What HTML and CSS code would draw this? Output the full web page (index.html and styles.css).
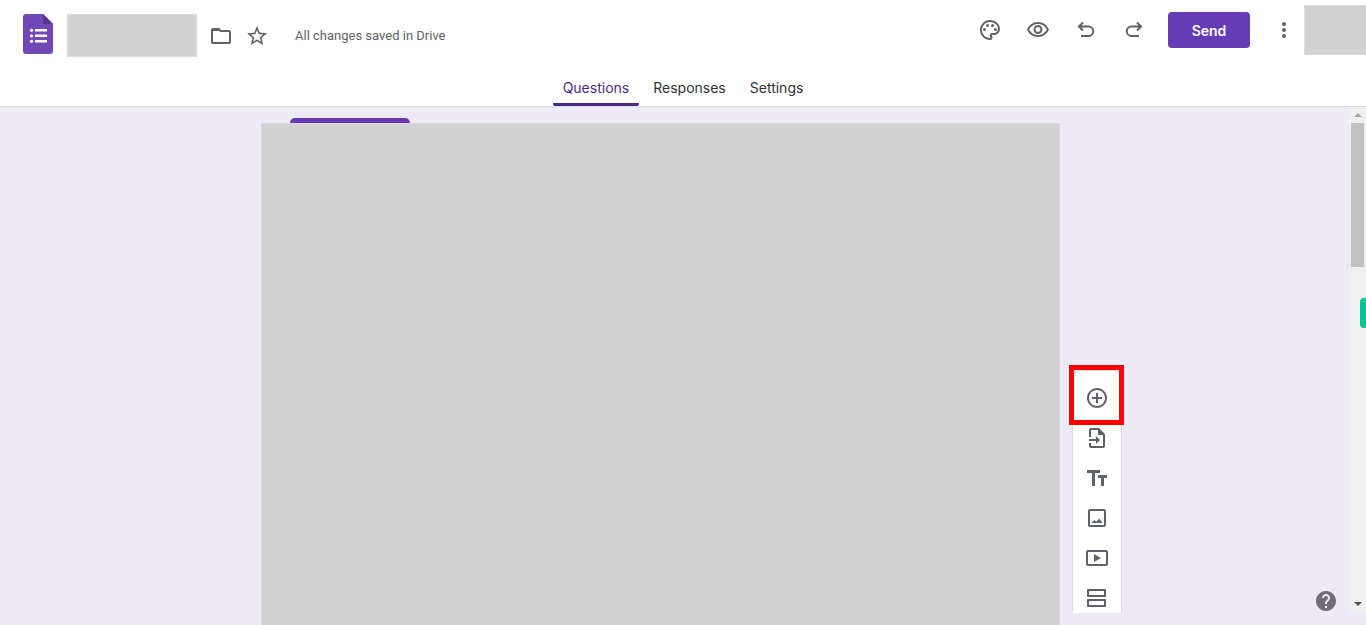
FILE: index.html
```html
<!DOCTYPE html>
<html lang="en">
<head>
<meta charset="utf-8">
<meta name="viewport" content="width=device-width, initial-scale=1">
<title>Form editor</title>
<link rel="stylesheet" href="styles.css">
</head>
<body>
<header class="header">
  <div class="topbar">
    <div class="brand">
      <a class="logo" href="#" aria-label="Forms home">
        <svg width="30" height="40" viewBox="0 0 30 40"><path fill="#7248b9" d="M3 0h17l10 10v27a3 3 0 0 1-3 3H3a3 3 0 0 1-3-3V3a3 3 0 0 1 3-3z"/><path fill="#56368a" d="M20 0l10 10H20z"/><g fill="#fff"><path d="M12 15h12v2.500H12zM12 20.500h12V23H12zM12 26h12v2.500H12z"/><circle cx="8.500" cy="16.300" r="1.600"/><circle cx="8.500" cy="21.800" r="1.600"/><circle cx="8.500" cy="27.300" r="1.600"/></g></svg>
      </a>
      <div class="title-mask"></div>
      <button class="icon-button" aria-label="Move to folder"><svg width="24" height="24" viewBox="0 0 24 24"><path d="M9.170 6l2 2H20v10H4V6h5.170M10 4H4c-1.100 0-1.990.9-1.990 2L2 18c0 1.100.9 2 2 2h16c1.100 0 2-.9 2-2V8c0-1.100-.9-2-2-2h-8l-2-2z"/><path d="M4 4h6l2 3H3z"/></svg></button>
      <button class="icon-button" aria-label="Star"><svg width="24" height="24" viewBox="0 0 24 24"><path d="M22 9.240l-7.190-.62L12 2 9.190 8.630 2 9.240l5.460 4.730L5.820 21 12 17.270 18.180 21l-1.630-7.030L22 9.240zM12 15.400l-3.760 2.270 1-4.280-3.320-2.880 4.380-.38L12 6.100l1.710 4.040 4.380.38-3.320 2.880 1 4.280L12 15.400z"/></svg></button>
      <span class="status">All changes saved in Drive</span>
    </div>
    <div class="actions">
      <button class="icon-button" aria-label="Customize theme"><svg width="24" height="24" viewBox="0 0 24 24"><path d="M12 22C6.490 22 2 17.510 2 12S6.490 2 12 2s10 4.040 10 9c0 3.310-2.690 6-6 6h-1.770c-.28 0-.5.220-.5.500 0 .12.050.23.130.33.410.47.640 1.060.64 1.670A2.500 2.500 0 0 1 12 22zm0-18c-4.410 0-8 3.590-8 8s3.590 8 8 8c.28 0 .5-.22.500-.5a.54.54 0 0 0-.14-.35c-.41-.46-.63-1.050-.63-1.650a2.500 2.500 0 0 1 2.500-2.500H16c2.210 0 4-1.790 4-4 0-3.860-3.590-7-8-7z"/><circle cx="6.500" cy="11.500" r="1.500"/><circle cx="9.500" cy="7.500" r="1.500"/><circle cx="14.500" cy="7.500" r="1.500"/><circle cx="17.500" cy="11.500" r="1.500"/></svg></button>
      <button class="icon-button" aria-label="Preview"><svg width="24" height="24" viewBox="0 0 24 24"><path d="M12 6c3.790 0 7.170 2.130 8.820 5.500C19.170 14.870 15.790 17 12 17s-7.170-2.130-8.820-5.500C4.830 8.130 8.210 6 12 6m0-2C7 4 2.730 7.110 1 11.500 2.730 15.890 7 19 12 19s9.270-3.110 11-7.500C21.270 7.110 17 4 12 4zm0 5a2.500 2.500 0 0 1 0 5 2.500 2.500 0 0 1 0-5m0-2c-2.480 0-4.500 2.020-4.500 4.500S9.520 16 12 16s4.500-2.020 4.500-4.500S14.480 7 12 7z"/></svg></button>
      <button class="icon-button" aria-label="Undo"><svg width="24" height="24" viewBox="0 0 24 24"><path class="stroke" d="M9 4.500L5 8.500l4 4M5 8.500h9.500a4.750 4.750 0 0 1 0 9.500H7"/></svg></button>
      <button class="icon-button" aria-label="Redo"><svg width="24" height="24" viewBox="0 0 24 24"><path class="stroke" d="M15 4.500l4 4-4 4M19 8.500H9.500a4.750 4.750 0 0 0 0 9.500H17"/></svg></button>
      <button class="send">Send</button>
      <button class="icon-button more" aria-label="More"><svg width="24" height="24" viewBox="0 0 24 24"><circle cx="12" cy="6" r="2"/><circle cx="12" cy="12" r="2"/><circle cx="12" cy="18" r="2"/></svg></button>
      <div class="account-mask"></div>
    </div>
  </div>
  <nav class="tabs">
    <a class="tab tab-active" href="#">Questions</a>
    <a class="tab" href="#">Responses</a>
    <a class="tab" href="#">Settings</a>
  </nav>
</header>
<main class="main">
  <div class="workspace">
    <section class="form">
      <div class="section-label"></div>
      <div class="form-mask"></div>
    </section>
    <div class="rail">
      <div class="toolbar">
        <button class="tool" aria-label="Add question"><svg width="24" height="24" viewBox="0 0 24 24"><path d="M13 7h-2v4H7v2h4v4h2v-4h4v-2h-4V7zm-1-5C6.490 2 2 6.490 2 12s4.490 10 10 10 10-4.490 10-10S17.510 2 12 2zm0 18c-4.410 0-8-3.590-8-8s3.590-8 8-8 8 3.590 8 8-3.590 8-8 8z"/></svg></button>
        <button class="tool" aria-label="Import questions"><svg width="24" height="24" viewBox="0 0 24 24"><path d="M14 2H6c-1.100 0-2 .9-2 2v7h2V4h7v5h5v11H6v-3H4v3c0 1.100.9 2 2 2h12c1.100 0 2-.9 2-2V8l-6-6z"/><path d="M11 10l4 4-4 4v-3H4v-2h7z"/></svg></button>
        <button class="tool" aria-label="Add title and description"><svg width="24" height="24" viewBox="0 0 24 24"><path d="M2 4v3h5v13h3V7h5V4H2zm20 5h-9v3h3v8h3v-8h3V9z"/></svg></button>
        <button class="tool" aria-label="Add image"><svg width="24" height="24" viewBox="0 0 24 24"><path d="M19 5v14H5V5h14m0-2H5c-1.100 0-2 .9-2 2v14c0 1.100.9 2 2 2h14c1.100 0 2-.9 2-2V5c0-1.100-.9-2-2-2z"/><path d="M14.140 12.400l-2.700 3.300-1.900-1.800L6.500 17h11z"/></svg></button>
        <button class="tool" aria-label="Add video"><svg width="24" height="24" viewBox="0 0 24 24"><path d="M9 8v8l7-4z"/><path d="M21 4H3c-1.100 0-2 .9-2 2v12c0 1.100.9 2 2 2h18c1.100 0 2-.9 2-2V6c0-1.100-.9-2-2-2zm0 14H3V6h18v12z"/></svg></button>
        <button class="tool" aria-label="Add section"><svg width="24" height="24" viewBox="0 0 24 24"><path d="M19 5v4H4V5h15m1-2H3c-.6 0-1 .4-1 1v6c0 .6.4 1 1 1h17c.6 0 1-.4 1-1V4c0-.6-.4-1-1-1zM19 15v4H4v-4h15m1-2H3c-.6 0-1 .4-1 1v6c0 .6.4 1 1 1h17c.6 0 1-.4 1-1v-6c0-.6-.4-1-1-1z"/></svg></button>
      </div>
      <div class="highlight"></div>
    </div>
  </div>
  <div class="scrollbar">
    <svg class="arrow arrow-up" width="8" height="4" viewBox="0 0 8 4"><path d="M4 0l4 4H0z"/></svg>
    <div class="thumb"></div>
    <svg class="arrow arrow-down" width="8" height="4" viewBox="0 0 8 4"><path d="M0 0h8L4 4z"/></svg>
  </div>
  <div class="side-badge"></div>
  <button class="help" aria-label="Help"><svg width="24" height="24" viewBox="0 0 24 24"><path d="M12 2C6.480 2 2 6.480 2 12s4.480 10 10 10 10-4.480 10-10S17.520 2 12 2zm1 17h-2v-2h2v2zm2.070-7.750l-.9.920C13.450 12.900 13 13.500 13 15h-2v-.5c0-1.100.45-2.100 1.170-2.830l1.240-1.260c.37-.36.590-.86.590-1.410 0-1.100-.9-2-2-2s-2 .9-2 2H8c0-2.210 1.790-4 4-4s4 1.790 4 4c0 .88-.36 1.680-.93 2.250z"/></svg></button>
</main>
</body>
</html>
```
FILE: styles.css
```css
* { box-sizing: border-box; }

body {
  margin: 0;
  height: 100vh;
  display: flex;
  flex-direction: column;
  overflow: hidden;
  background: #fff;
  color: #202124;
  font-family: "Google Sans", Inter, sans-serif;
  font-size: 14px;
}

button {
  margin: 0;
  padding: 0;
  border: 0;
  background: none;
  font: inherit;
  cursor: pointer;
}

svg { display: block; fill: #5f6368; }

.header { border-bottom: 1px solid #dadce0; }

.topbar {
  display: flex;
  justify-content: space-between;
  align-items: flex-start;
  height: 72px;
}

.brand {
  display: flex;
  align-items: center;
  gap: 12px;
  padding: 14px 0 0 23px;
}

.logo { padding-bottom: 3px; }

.title-mask {
  width: 130px;
  height: 43px;
  margin-left: 2px;
  background: #d2d2d2;
  border: 1px solid #dcdcdc;
}

.status {
  margin-left: 14px;
  font-family: Roboto, sans-serif;
  font-size: 13px;
  line-height: 16px;
  color: #5f6368;
}

.actions {
  display: flex;
  align-items: center;
  gap: 24px;
  padding-top: 5px;
}

.send {
  width: 82px;
  height: 36px;
  margin: 0 -2px;
  border-radius: 4px;
  background: #673ab7;
  color: #fff;
  font-weight: 600;
}

.account-mask {
  width: 62px;
  height: 50px;
  margin-left: -16px;
  background: #d2d2d2;
  border: 1px solid #dcdcdc;
  border-right: 0;
}

.tabs {
  display: flex;
  justify-content: center;
  gap: 4px;
}

.tab {
  height: 34px;
  padding: 0 10px;
  border-bottom: 3px solid transparent;
  color: #303236;
  line-height: 32px;
  text-decoration: none;
}

.tab-active {
  color: #4c2b87;
  background: linear-gradient(#4c2b87, #4c2b87) bottom / 100% 3px no-repeat border-box;
  border-radius: 0 0 2px 2px;
}

.main {
  position: relative;
  flex: 1;
  min-height: 0;
  display: flex;
  background: #eeeaf8;
}

.workspace {
  flex: 1;
  min-width: 0;
  display: flex;
  justify-content: center;
  gap: 13px;
  padding-left: 33px;
}

.form {
  flex: 0 1 799px;
  display: flex;
  flex-direction: column;
  padding-top: 11px;
}

.section-label {
  width: 120px;
  height: 5px;
  margin-left: 29px;
  border-radius: 8px 8px 0 0;
  background: #673ab7;
}

.form-mask {
  flex: 1;
  background: #d2d2d2;
  border: 1px solid #dadada;
  border-bottom: 0;
}

.rail {
  position: relative;
  display: flex;
  margin: 264px 0 12px;
}

.toolbar {
  width: 48px;
  padding-top: 7px;
  overflow: hidden;
  border-radius: 8px 8px 0 0;
  background: #fff;
  box-shadow: -1px -1px 0 #dddae5, 1px -1px 0 #dddae5;
}

.tool {
  display: flex;
  justify-content: center;
  align-items: center;
  width: 48px;
  height: 40px;
}

.highlight {
  position: absolute;
  top: -6px;
  left: -4px;
  width: 55px;
  height: 60px;
  border: 5px solid #f00;
  pointer-events: none;
}

.scrollbar {
  width: 17px;
  margin-bottom: 13px;
  padding: 6px 2px;
  display: flex;
  flex-direction: column;
  align-items: center;
  background: #f0f0f0;
}

.arrow-up { fill: #a3a3a3; }

.arrow-down { margin-top: auto; fill: #505050; }

.thumb {
  width: 13px;
  height: 144px;
  margin-top: 6px;
  background: #c1c1c1;
}

.side-badge {
  position: absolute;
  top: 191px;
  right: 0;
  width: 6px;
  height: 30px;
  border-radius: 4px 0 0 4px;
  background: #00c996;
}

.help {
  position: absolute;
  right: 28px;
  bottom: 12px;
}

.help svg { fill: #706c78; }

.icon-button .stroke {
  fill: none;
  stroke: #5f6368;
  stroke-width: 2;
}
```
